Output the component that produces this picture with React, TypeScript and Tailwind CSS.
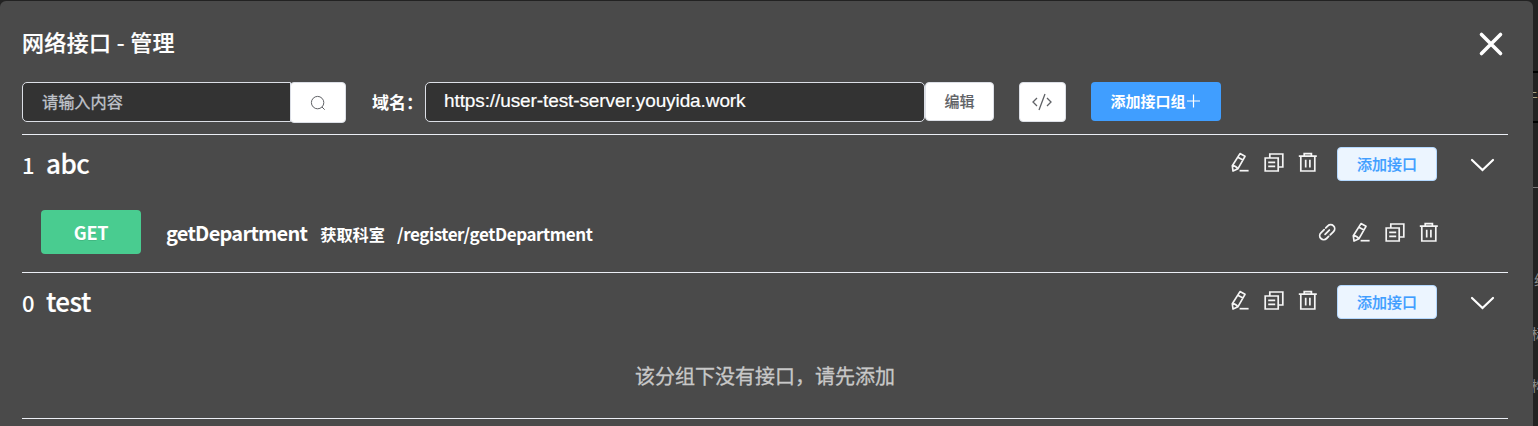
import React from "react";

const Svg = ({ children, w = 1.7 }: { children: React.ReactNode; w?: number }) => (
  <svg width="22" height="22" viewBox="0 0 22 22" fill="none" stroke="#f5f5f5" strokeWidth={w}>{children}</svg>
);

const LinkIcon = () => (
  <Svg w={1.8}>
    <g transform="rotate(-45 11.2 11.2)" strokeLinecap="round">
      <path d="M9.2 15.2H6.3a4 4 0 0 1 0-8h4.6" />
      <path d="M13.2 7.2h2.9a4 4 0 0 1 0 8h-4.6M8.2 11.2h6" />
    </g>
  </Svg>
);
const PenIcon = () => (
  <Svg>
    <path d="M11 2.6l5 2.7-7 12.4-5 2.3-.7-5.3zM8.8 6.2l5.2 2.8M3.4 14.7q3.5.2 5.4 3" strokeLinejoin="round" />
    <path d="M10.6 19.7h9" />
  </Svg>
);
const CopyIcon = () => (
  <Svg>
    <path d="M2.2 7h13v13h-13zM6.8 7V3h13v13H15.2M5.2 11.3h7M5.2 15.3h7" />
  </Svg>
);
const TrashIcon = () => (
  <Svg>
    <path d="M1.8 5.2h18M7.2 5V2.7h7.2V5M3.8 5.2V20h14V5.2M8.7 8.8v7.7M12.9 8.8v7.7" />
  </Svg>
);

const Actions = ({ link = false }: { link?: boolean }) => (
  <div className="flex gap-3">
    {link && <LinkIcon />}
    <PenIcon />
    <CopyIcon />
    <TrashIcon />
  </div>
);

const GroupHeader = ({ count, name }: { count: number; name: string }) => (
  <div className="flex h-[58px] items-center pr-[13px]">
    <span className="w-6 text-[22px] font-medium tracking-[-0.3px]">{count}</span>
    <span className="-mt-1 text-[26px] font-medium tracking-[-0.5px] [-webkit-text-stroke:0.2px_white]">{name}</span>
    <div className="mb-1 ml-auto"><Actions /></div>
    <button className="ml-[18px] h-[34px] w-[100px] rounded-[4px] border border-[#b3d8ff] bg-[#ecf5ff] text-[15px] font-medium text-[#409eff] [-webkit-text-stroke:0.2px_#409eff]">添加接口</button>
    <svg className="mt-0.5 ml-[33px]" width="25" height="24" viewBox="0 0 25 24" fill="none" stroke="white" strokeWidth="2.2" strokeLinecap="round">
      <path d="M2 7l10.5 10L23 7" />
    </svg>
  </div>
);

export default function App() {
  return (
    <div className="flex h-[426px] w-[1538px] overflow-hidden bg-[#222] pt-px font-['Noto_Sans_CJK_SC',sans-serif] text-white">
      <main className="h-[425px] w-[1533px] shrink-0 rounded-t-[6px] bg-[#4a4a4a] pr-[25px] pl-[22px]">
        <header className="flex h-[81px] items-center justify-between pr-[4.5px]">
          <h1 className="text-[22px] font-medium tracking-[0.35px] [-webkit-text-stroke:0.2px_white]">网络接口 - 管理</h1>
          <svg className="mt-1" width="26" height="26" viewBox="0 0 26 26" stroke="white" strokeWidth="3.6" strokeLinecap="round"><path d="M3.5 3.5l19 19M22.5 3.5l-19 19" /></svg>
        </header>
        <div className="flex h-[53px] items-start border-b border-[#ebeef5]">
          <div className="flex h-10 w-[269px] items-center rounded-l-[5px] border border-[#dcdfe6] bg-[#333] pb-0.5 pl-[19px] text-[16.2px] text-[#c0c4cc] [-webkit-text-stroke:0.3px_#c0c4cc]">请输入内容</div>
          <button className="-ml-px flex h-[41px] w-14 items-center justify-center rounded-[4px] border border-[#dcdfe6] bg-white">
            <svg width="16" height="16" viewBox="0 0 16 16" fill="none" stroke="#606266"><circle cx="7.6" cy="7.6" r="6.2" /><path d="M12 12l2.7 2.7" /></svg>
          </button>
          <span className="ml-[26px] w-[53px] whitespace-nowrap text-[17px] leading-10 font-bold">域名：</span>
          <div className="flex h-10 w-[500px] items-center rounded-[5px] border border-[#dcdfe6] bg-[#333] pb-0.5 pl-[18px] font-['Liberation_Sans',sans-serif] text-[19px] tracking-[-0.1px] [-webkit-text-stroke:0.2px_white]">https://user-test-server.youyida.work</div>
          <button className="h-[39px] w-[69px] rounded-[4px] border border-[#dcdfe6] bg-white text-[15px] font-medium text-[#606266] [-webkit-text-stroke:0.1px_#606266]">编辑</button>
          <button className="ml-[25px] flex h-10 w-[47px] items-center justify-center rounded-[4px] border border-[#dcdfe6] bg-white pr-0.5">
            <svg width="20" height="18" viewBox="0 0 20 18" fill="none" stroke="#606266" strokeWidth="1.3"><path d="M5 5L1 9l4 4M15 5l4 4-4 4M13 1L7 17" /></svg>
          </button>
          <button className="ml-[25px] flex h-[39px] w-[130px] items-center justify-center rounded-[4px] bg-[#409eff] pr-px text-[15px] font-bold">
            添加接口组
            <svg width="15" height="15" viewBox="0 0 15 15" stroke="white" strokeWidth="1.2"><path d="M1 7h13M7.5 .5v13" /></svg>
          </button>
        </div>
        <section className="h-[138px] border-b border-[#ebeef5]">
          <GroupHeader count={1} name="abc" />
          <div className="mt-[17px] ml-[19px] flex h-11 items-center pr-[68px]">
            <span className="flex h-11 w-[100px] items-center justify-center rounded-[4px] bg-[#49cc90] text-[18px] font-bold tracking-[-0.3px] [text-shadow:0_1px_0_rgba(0,0,0,0.1)]">GET</span>
            <div className="mt-0.5 ml-[25px] flex items-baseline font-bold">
              <span className="text-[20px] tracking-[-0.75px]">getDepartment</span>
              <span className="ml-[13px] text-[16.2px]">获取科室</span>
              <span className="ml-3 text-[17px] tracking-[-0.42px]">/register/getDepartment</span>
            </div>
            <div className="ml-auto"><Actions link /></div>
          </div>
        </section>
        <section className="h-[146px] border-b border-[#ebeef5]">
          <GroupHeader count={0} name="test" />
          <p className="mt-[30px] text-center text-[20px] leading-[30px] text-[#c8c8c8] [-webkit-text-stroke:0.3px_#c8c8c8]">该分组下没有接口，请先添加</p>
        </section>
      </main>
      <aside className="flex w-[5px] flex-col overflow-hidden text-[14px] leading-5 text-[#8b8b8b]">
        <div className="mt-[70px] flex h-[52px] items-center justify-end border-y-2 border-black text-[#a39e83]">于</div>
        <div className="h-[65px] border-b border-[#777]" />
        <div className="mt-[81px] ml-px h-5">组</div>
        <div className="mt-[34px] -ml-0.5 h-5">标</div>
        <div className="mt-8 -ml-0.5 h-5">构</div>
      </aside>
    </div>
  );
}
